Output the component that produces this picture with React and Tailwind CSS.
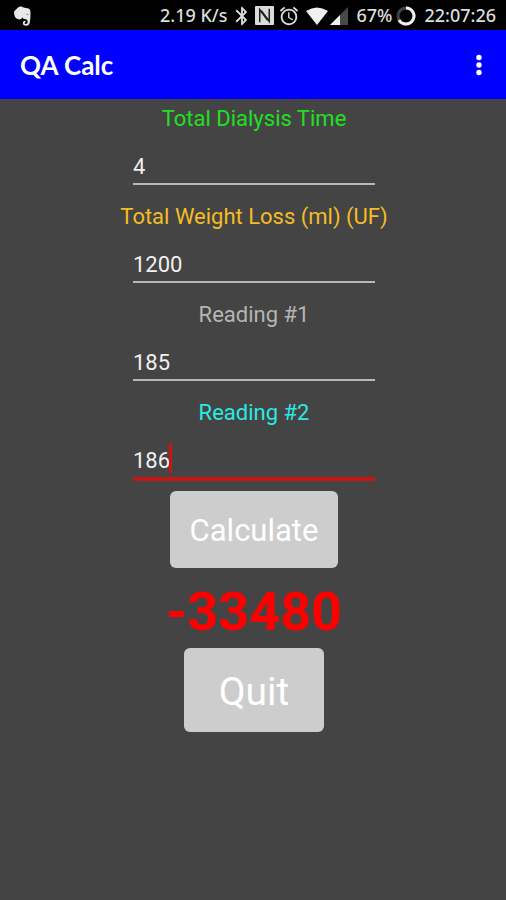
import React from "react";
import { MdAlarm, MdBluetooth } from "react-icons/md";

const fields = [
  { id: "time", label: "Total Dialysis Time", value: "4", color: "text-[#1fe01f]" },
  { id: "loss", label: "Total Weight Loss (ml) (UF)", value: "1200", color: "text-[#f4bc26]" },
  { id: "reading1", label: "Reading #1", value: "185", color: "text-[#b5b5b5]" },
  { id: "reading2", label: "Reading #2", value: "186", color: "text-[#2be8e4]", active: true }
];

function StatusBar() {
  return (
    <div className="flex h-[30px] items-center justify-between bg-black pr-2 pl-3 pt-px font-['Noto_Sans',sans-serif] text-[18px] font-medium text-[#dcdcdc]">
      <svg className="h-5 w-5" viewBox="0 0 20 20">
        <path
          d="M6 1.500Q9-.5 11.500 1.500L16.500 2.500Q18.500 3 18.500 7Q18.500 14 17.500 17.500Q17 19.800 14 19.800Q10.800 19.800 10.800 17Q10.800 14.800 13.500 14.600V16.200Q12.500 16.300 12.600 17.200Q12.800 18 14 18Q15.800 18 15.700 15.500Q15.500 13.200 12.500 13Q10.800 12.800 10.300 11.500Q9.500 13.800 6.500 13.300Q3.500 12.800 2.800 10.500Q2 8 2 5.500z"
          fill="#e8e8e8"
        />
        <path d="M14 8.300q1.300-1.500 2.600.4z" fill="#444" />
      </svg>
      <div className="flex items-center pr-0.5">
        <span>2.19 K/s</span>
        <MdBluetooth className="ml-1 h-[22px] w-[22px]" />
        <svg className="ml-0.5 h-[19px] w-[19px]" viewBox="0 0 18 18">
          <rect width="18" height="18" rx="1" fill="#dcdcdc" />
          <path d="M4.500 15.500V3.500L12 13.500M13.500 2.500v12L6 4.500" fill="none" stroke="#222" strokeWidth="1.500" />
        </svg>
        <MdAlarm className="ml-1 h-[22px] w-[22px]" />
        <svg className="ml-1.5 h-[18px] w-[22px]" viewBox="0 0 22 18">
          <path d="M0 4Q11 -3 22 4L11 18Z" fill="#f0f0f0" />
        </svg>
        <svg className="ml-0.5 h-[18px] w-[18px]" viewBox="0 0 18 18">
          <path d="M18 0v18H0z" fill="#484848" />
          <path d="M10 8v10H0z" fill="#f0f0f0" />
        </svg>
        <span className="ml-2">67%</span>
        <svg className="ml-1 h-5 w-5" viewBox="0 0 20 20">
          <circle cx="10" cy="10" r="8" fill="none" stroke="#444" strokeWidth="3" />
          <path d="M10 2a8 8 0 1 1-7 12" fill="none" stroke="#f0f0f0" strokeWidth="3" />
        </svg>
        <span className="ml-2">22:07:26</span>
      </div>
    </div>
  );
}

function Field({ id, label, value, color, active }) {
  return (
    <div className="flex flex-col items-center">
      <label htmlFor={id} className={`pt-0.5 text-[22px] leading-9 ${color}`}>
        {label}
      </label>
      <div className="relative w-[242px]">
        <input
          id={id}
          type="text"
          inputMode="numeric"
          defaultValue={value}
          className={
            active
              ? "block h-[50px] w-full border-b-4 border-[#c81414] bg-transparent pt-3 text-[22px] text-[#f0f0f0] outline-none"
              : "block h-12 w-full border-b-2 border-[#b8b8b8] bg-transparent pt-3 text-[22px] text-[#f0f0f0] outline-none"
          }
        />
        {active && <span className="absolute top-3 left-9 h-[30px] w-[3px] bg-[#c81414]" />}
      </div>
    </div>
  );
}

export default function App() {
  return (
    <div className="flex min-h-screen flex-col bg-[#444444] font-[Roboto,sans-serif]">
      <StatusBar />
      <header className="flex h-[69px] items-center justify-between bg-[#0000ff] px-5 text-white">
        <h1 className="pt-0.5 font-[Lato,sans-serif] text-[26px] font-bold">QA Calc</h1>
        <button type="button" aria-label="More options" className="w-3.5">
          <svg className="h-[22px] w-3.5" viewBox="0 0 14 22" fill="currentColor">
            <circle cx="7" cy="3.500" r="2.700" />
            <circle cx="7" cy="11" r="2.700" />
            <circle cx="7" cy="18.500" r="2.700" />
          </svg>
        </button>
      </header>
      <main className="flex flex-col items-center pl-0.5">
        <form className="flex flex-col gap-3">
          {fields.map((f) => (
            <Field key={f.id} {...f} />
          ))}
        </form>
        <button type="button" className="mt-[10px] h-[77px] rounded-md bg-[#cdcdcd] px-5 pt-1 text-[31px] text-white">
          Calculate
        </button>
        <output className="mt-3 mb-1 text-[54px] leading-[64px] font-bold text-[#ff0000]">-33480</output>
        <button type="button" className="h-[84px] rounded-md bg-[#cdcdcd] px-[35px] pt-1 text-[39px] text-white">
          Quit
        </button>
      </main>
    </div>
  );
}
